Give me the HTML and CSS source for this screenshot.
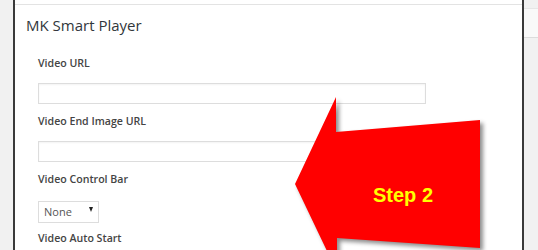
FILE: index.html
```html
<!DOCTYPE html>
<html lang="en">
<head>
<meta charset="utf-8">
<title>MK Smart Player</title>
<link rel="stylesheet" href="styles.css">
</head>
<body>
<div class="page">
  <div class="gutter"></div>
  <div class="modal">
    <div class="modal-top"></div>
    <div class="modal-body">
      <h1 class="title">MK Smart Player</h1>
      <div class="form">
        <div class="field">
          <label class="label">Video URL</label>
          <input class="text-input" type="text">
        </div>
        <div class="field">
          <label class="label">Video End Image URL</label>
          <input class="text-input" type="text">
        </div>
        <div class="field">
          <label class="label">Video Control Bar</label>
          <div class="select-wrap">
            <select class="select"><option>None</option></select>
          </div>
        </div>
        <div class="field">
          <label class="label">Video Auto Start</label>
        </div>
      </div>
    </div>
  </div>
  <div class="sidebar"><div class="sidebar-tab"></div></div>
  <svg class="arrow" width="538" height="250" viewBox="0 0 538 250" xmlns="http://www.w3.org/2000/svg">
    <polygon class="arrow-shape" points="336,97 336,132 480,120 480,248 337,238 337,272 295,184"/>
    <text class="arrow-text" x="373" y="202">Step 2</text>
  </svg>
</div>
</body>
</html>
```
FILE: styles.css
```css
html, body {
  margin: 0;
  padding: 0;
}
body {
  background: #f1f1f1;
  font-family: "Open Sans", "Noto Sans", sans-serif;
}
.page {
  position: relative;
  display: flex;
  width: 538px;
  height: 250px;
  overflow: hidden;
}
.gutter {
  width: 13px;
  flex: none;
  background: #f1f1f1;
}
.modal {
  width: 507px;
  flex: none;
  background: #fff;
  border-left: 2px solid #3a3a3a;
  border-right: 2px solid #3a3a3a;
}
.modal-top {
  height: 4px;
  border-bottom: 1px solid #e3e3e3;
}
.modal-body {
  padding: 10px 0 0 11px;
}
.title {
  margin: 0 0 22px;
  font-size: 15px;
  line-height: 20px;
  font-weight: 400;
  color: #32373c;
}
.form {
  margin-left: 12px;
}
.field {
  margin-bottom: 11px;
}
.label {
  display: block;
  font-size: 10.6px;
  line-height: 13px;
  font-weight: 600;
  color: #444;
  margin-bottom: 13px;
}
.text-input {
  display: block;
  box-sizing: border-box;
  width: 388px;
  height: 21px;
  margin: 0;
  border: 1px solid #dddddd;
  background: #fff;
  box-shadow: inset 0 1px 2px rgba(0, 0, 0, 0.05);
}
.select-wrap {
  position: relative;
  width: 61px;
  height: 22px;
}
.select {
  appearance: none;
  -webkit-appearance: none;
  box-sizing: border-box;
  width: 61px;
  height: 22px;
  margin: 0;
  padding: 0 0 0 5px;
  border: 1px solid #dddddd;
  border-radius: 0;
  background: #fff;
  font-family: "Open Sans", "Noto Sans", sans-serif;
  font-size: 11px;
  color: #555;
}
.select-wrap::after {
  content: "";
  position: absolute;
  left: 51px;
  top: 8px;
  border-left: 2.5px solid transparent;
  border-right: 2.5px solid transparent;
  border-top: 5px solid #222;
  pointer-events: none;
}
.sidebar {
  flex: 1;
  background: #f1f1f1;
  padding-top: 8px;
}
.sidebar-tab {
  height: 28px;
  background: #f9f9f9;
  border-top: 1px solid #e6e6e6;
  border-bottom: 1px solid #dcdcdc;
}
.arrow {
  position: absolute;
  left: 0;
  top: 0;
}
.arrow-shape {
  fill: #ff0000;
  filter: drop-shadow(3px 3px 2px rgba(0, 0, 0, 0.45));
}
.arrow-text {
  font-family: "Liberation Sans", Arial, sans-serif;
  font-weight: 700;
  font-size: 20px;
  fill: #ffff00;
}
```
